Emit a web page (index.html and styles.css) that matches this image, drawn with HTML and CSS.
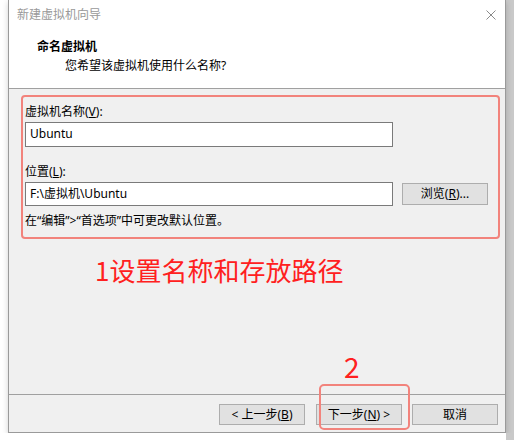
FILE: index.html
```html
<!DOCTYPE html>
<html>
<head>
    <title>新建虚拟机向导</title>
    <link rel="stylesheet" href="styles.css">
</head>
<body>
    <div class="window">
        <div class="top">
            <div class="titlebar">
                <span class="title">新建虚拟机向导</span>
                <svg class="close" width="10" height="10" viewBox="0 0 10 10">
                    <path d="M0.5 0.5 L9.5 9.5 M9.5 0.5 L0.5 9.5" stroke="#8a8a8a" stroke-width="1" fill="none"/>
                </svg>
            </div>
            <div class="heading">命名虚拟机</div>
            <div class="subheading">您希望该虚拟机使用什么名称?</div>
        </div>

        <div class="content">
            <div class="group">
                <div class="label">虚拟机名称(<u>V</u>):</div>
                <div class="field name-field">Ubuntu</div>

                <div class="label second">位置(<u>L</u>):</div>
                <div class="row">
                    <div class="field">F:\虚拟机\Ubuntu</div>
                    <button class="btn browse">浏览(<u>R</u>)...</button>
                </div>
                <div class="hint">在“编辑”&gt;“首选项”中可更改默认位置。</div>
            </div>
        </div>

        <div class="footer">
            <button class="btn">&lt; 上一步(<u>B</u>)</button>
            <button class="btn next">下一步(<u>N</u>) &gt;</button>
            <button class="btn cancel">取消</button>
        </div>

        <!-- 标注 -->
        <div class="note note1">1设置名称和存放路径</div>
        <div class="note note2">2</div>
        <div class="mark"></div>
    </div>
</body>
</html>
```

FILE: styles.css
```css
body {
    margin: 0;
    background: linear-gradient(to right, #ffffff 506px, #c9c9c9 506px);
    font-family: "Noto Sans", "Noto Sans CJK SC", sans-serif;
    font-size: 12px;
    line-height: 16px;
    color: #000;
}
.window {
    position: relative;
    margin-left: 8px;
    width: 498px;
    height: 433px;
    box-sizing: border-box;
    border: 1px solid #9a9a9a;
    border-top: none;
    background: #f0f0f0;
    display: flex;
    flex-direction: column;
    box-shadow: 0 2px 6px rgba(0,0,0,0.18);
}
.top {
    background: #fff;
    height: 88px;
    border-bottom: 1px solid #a0a0a0;
}
.titlebar {
    height: 30px;
    display: flex;
    align-items: center;
    justify-content: space-between;
    padding: 0 9px 0 8px;
}
.title {
    color: #999;
}
.heading {
    font-weight: bold;
    margin: 9px 0 0 28px;
}
.subheading {
    margin: 3px 0 0 56px;
}
.content {
    flex: 1;
    padding: 6px 5px 0 12px;
}
.group {
    border: 2px solid #f2837c;
    border-radius: 4px;
    padding: 7px 2px 8px 2px;
    height: 144px;
    box-sizing: border-box;
}
.label.second {
    margin-top: 17px;
}
.field {
    margin-top: 2px;
    width: 368px;
    height: 25px;
    box-sizing: border-box;
    border: 1px solid #7a7a7a;
    background: #fff;
    padding: 3px 0 0 4px;
}
.row {
    display: flex;
    align-items: center;
    gap: 9px;
}
.row .field {
    height: 24px;
}
.btn {
    font-family: inherit;
    font-size: 12px;
    line-height: 16px;
    width: 86px;
    height: 21px;
    padding: 0;
    background: #e1e1e1;
    border: 1px solid #adadad;
    color: #000;
}
.browse {
    height: 22px;
    margin-top: 2px;
}
.hint {
    margin-top: 7px;
}
.footer {
    height: 38px;
    box-sizing: border-box;
    border-top: 1px solid #a0a0a0;
    display: flex;
    justify-content: flex-end;
    gap: 10px;
    padding: 9px 7px 0 0;
}
.footer .next {
    margin-left: 1px;
}
.note {
    position: absolute;
    color: #ff2020;
    font-family: "Noto Sans CJK SC", sans-serif;
}
.note1 {
    left: 86px;
    top: 254px;
    font-size: 26px;
    line-height: 32px;
}
.note2 {
    left: 335px;
    top: 350px;
    font-size: 28px;
    line-height: 32px;
}
.mark {
    position: absolute;
    left: 310px;
    top: 384px;
    width: 91px;
    height: 46px;
    box-sizing: border-box;
    border: 2px solid #f2837c;
    border-radius: 5px;
}
```
